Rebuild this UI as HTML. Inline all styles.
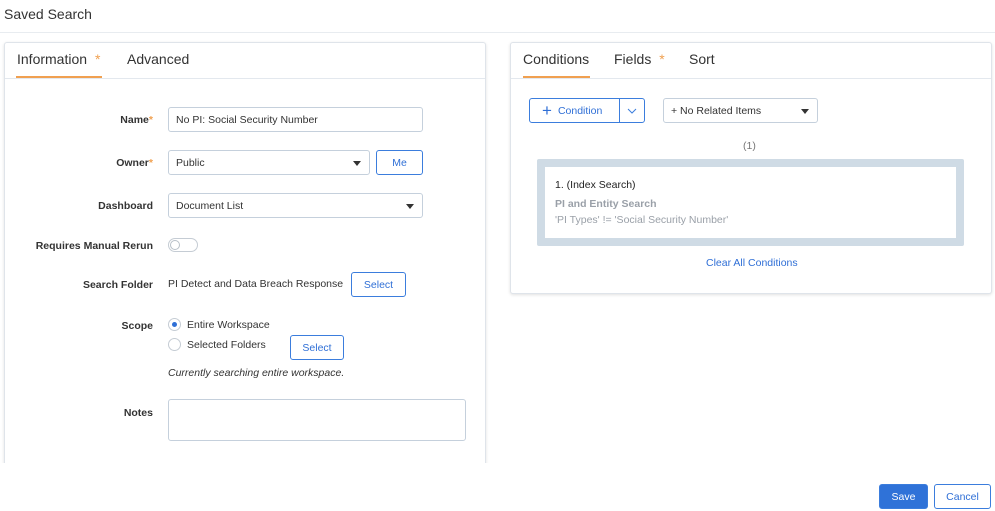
<!DOCTYPE html>
<html><head><style>
*{box-sizing:border-box;margin:0;padding:0}
body{width:995px;height:511px;background:#fff;font-family:"Liberation Sans",sans-serif;position:relative;overflow:hidden;color:#333}
.a{position:absolute}
.lbl{position:absolute;right:842px;font-size:10.5px;font-weight:bold;color:#333;white-space:nowrap}
.st{color:#f0a050}
.inp{position:absolute;border:1px solid #c5d0dc;border-radius:3px;font-size:10.5px;color:#333;padding-left:7px;display:flex;align-items:center;background:#fff}
.btn{position:absolute;border:1px solid #3b7ddd;border-radius:3px;color:#2f6fd6;font-size:10.5px;display:flex;align-items:center;justify-content:center;background:#fff}
.caret{position:absolute;right:8px;top:50%;margin-top:-2px;border-left:4px solid transparent;border-right:4px solid transparent;border-top:5px solid #333}
.panel{position:absolute;border:1px solid #dfe4ea;border-radius:3px;box-shadow:0 1px 3px rgba(0,0,0,.12);background:#fff}
.tab{position:absolute;font-size:14px;color:#333}
.t{position:absolute;font-size:10.5px;white-space:nowrap}
</style></head><body>
<div class="a" style="left:4px;top:6px;font-size:14px;color:#333">Saved Search</div>
<div class="a" style="left:0;top:32px;width:995px;height:1px;background:#e8ecf0"></div>

<div class="panel" style="left:4px;top:42px;width:482px;height:440px;border-bottom:none"></div>
<div class="a" style="left:0;top:463px;width:500px;height:48px;background:#fff"></div>
<div class="a" style="left:5px;top:78px;width:480px;height:1px;background:#e3e8ee"></div>
<div class="tab" style="left:17px;top:51px">Information <span class="st" style="margin-left:4px">*</span></div>
<div class="a" style="left:16px;top:76px;width:86px;height:2px;background:#f0a050"></div>
<div class="tab" style="left:127px;top:51px">Advanced</div>

<div class="lbl" style="top:114px">Name<span class="st">*</span></div>
<div class="inp" style="left:168px;top:107px;width:255px;height:25px">No PI: Social Security Number</div>
<div class="lbl" style="top:157px">Owner<span class="st">*</span></div>
<div class="inp" style="left:168px;top:150px;width:202px;height:25px">Public<span class="caret"></span></div>
<div class="btn" style="left:376px;top:150px;width:47px;height:25px">Me</div>
<div class="lbl" style="top:200px">Dashboard</div>
<div class="inp" style="left:168px;top:193px;width:255px;height:25px">Document List<span class="caret"></span></div>
<div class="lbl" style="top:240px">Requires Manual Rerun</div>
<div class="a" style="left:168px;top:238px;width:30px;height:14px;border:1px solid #c5ccd4;border-radius:7px"><div class="a" style="left:1px;top:1px;width:10px;height:10px;border-radius:50%;border:1px solid #b8c0c8;background:#fff"></div></div>
<div class="lbl" style="top:279px">Search Folder</div>
<div class="t" style="left:168px;top:278px">PI Detect and Data Breach Response</div>
<div class="btn" style="left:351px;top:272px;width:55px;height:25px">Select</div>
<div class="lbl" style="top:320px">Scope</div>
<div class="a" style="left:168px;top:318px;width:13px;height:13px;border-radius:50%;border:1px solid #c5ccd4"><div class="a" style="left:3px;top:3px;width:5px;height:5px;border-radius:50%;background:#2f6fd6"></div></div>
<div class="t" style="left:187px;top:319px">Entire Workspace</div>
<div class="a" style="left:168px;top:338px;width:13px;height:13px;border-radius:50%;border:1px solid #c5ccd4"></div>
<div class="t" style="left:187px;top:339px">Selected Folders</div>
<div class="btn" style="left:290px;top:335px;width:54px;height:25px">Select</div>
<div class="t" style="left:168px;top:367px;font-style:italic">Currently searching entire workspace.</div>
<div class="lbl" style="top:407px">Notes</div>
<div class="inp" style="left:168px;top:399px;width:298px;height:42px"></div>

<div class="panel" style="left:510px;top:42px;width:482px;height:252px"></div>
<div class="a" style="left:511px;top:78px;width:480px;height:1px;background:#e3e8ee"></div>
<div class="tab" style="left:523px;top:51px">Conditions</div>
<div class="a" style="left:523px;top:76px;width:67px;height:2px;background:#f0a050"></div>
<div class="tab" style="left:614px;top:51px">Fields <span class="st" style="margin-left:4px">*</span></div>
<div class="tab" style="left:689px;top:51px">Sort</div>

<div class="btn" style="left:529px;top:98px;width:116px;height:25px;justify-content:flex-start;padding-left:12px"><span style="font-size:17px;font-weight:300;margin-right:6px;line-height:1">+</span>Condition</div>
<div class="a" style="left:619px;top:98px;width:1px;height:25px;background:#3b7ddd"></div>
<svg class="a" style="left:627px;top:107px" width="10" height="8"><path d="M1 2 L5 6 L9 2" fill="none" stroke="#3b7ddd" stroke-width="1"/></svg>
<div class="inp" style="left:663px;top:98px;width:155px;height:25px">+ No Related Items<span class="caret"></span></div>
<div class="t" style="left:743px;top:140px;color:#777">(1)</div>
<div class="a" style="left:537px;top:159px;width:427px;height:87px;background:#cfdbe5;border-radius:2px"></div>
<div class="a" style="left:545px;top:167px;width:411px;height:71px;background:#fff"></div>
<div class="t" style="left:555px;top:179px;color:#222">1. (Index Search)</div>
<div class="t" style="left:555px;top:198px;font-weight:bold;color:#9aa0a8">PI and Entity Search</div>
<div class="t" style="left:555px;top:214px;color:#9aa0a8">'PI Types' != 'Social Security Number'</div>
<div class="t" style="left:706px;top:257px;color:#2f6fd6">Clear All Conditions</div>

<div class="btn" style="left:879px;top:484px;width:49px;height:25px;background:#2f72d8;color:#fff">Save</div>
<div class="btn" style="left:934px;top:484px;width:57px;height:25px">Cancel</div>
</body></html>
